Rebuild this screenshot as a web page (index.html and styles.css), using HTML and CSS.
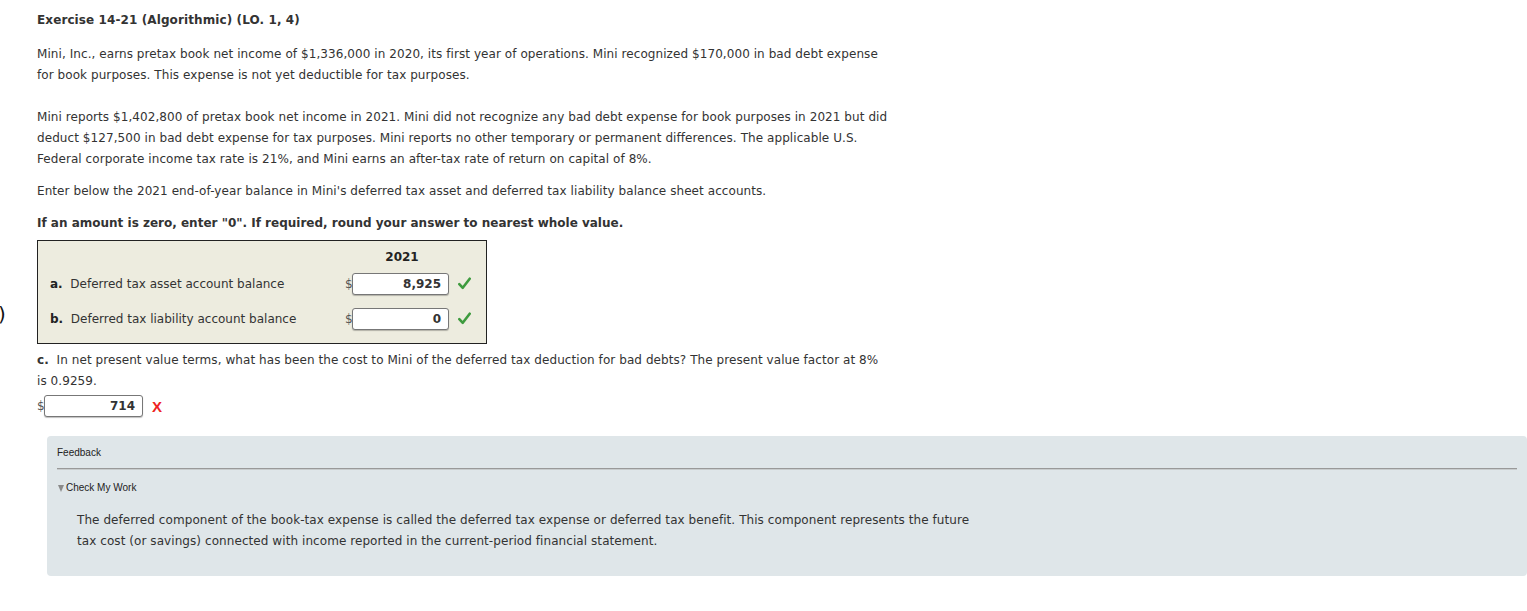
FILE: index.html
```html
<!DOCTYPE html>
<html>
<head>
<meta charset="utf-8">
<link rel="stylesheet" href="styles.css">
</head>
<body>
<span class="edge">)</span>
<main class="page">
  <h1 class="title">Exercise 14-21 (Algorithmic) (LO. 1, 4)</h1>
  <p class="para">Mini, Inc., earns pretax book net income of $1,336,000 in 2020, its first year of operations. Mini recognized $170,000 in bad debt expense<br>for book purposes. This expense is not yet deductible for tax purposes.</p>
  <p class="para gap-big">Mini reports $1,402,800 of pretax book net income in 2021. Mini did not recognize any bad debt expense for book purposes in 2021 but did<br>deduct $127,500 in bad debt expense for tax purposes. Mini reports no other temporary or permanent differences. The applicable U.S.<br>Federal corporate income tax rate is 21%, and Mini earns an after-tax rate of return on capital of 8%.</p>
  <p class="para">Enter below the 2021 end-of-year balance in Mini's deferred tax asset and deferred tax liability balance sheet accounts.</p>
  <p class="para strong">If an amount is zero, enter "0". If required, round your answer to nearest whole value.</p>

  <div class="answer-box">
    <div class="row head"><span class="label"></span><span class="year">2021</span></div>
    <div class="row">
      <span class="label"><b>a.</b>&nbsp; Deferred tax asset account balance</span>
      <span class="field"><span class="dollar">$</span><span class="input">8,925</span></span>
      <svg class="check" width="13" height="13" viewBox="0 0 12 12"><path d="M1.2 6.6 L4.4 10 L10.8 1.6" fill="none" stroke="#3e9b3e" stroke-width="2.4" stroke-linecap="round" stroke-linejoin="round"/></svg>
    </div>
    <div class="row">
      <span class="label"><b>b.</b>&nbsp; Deferred tax liability account balance</span>
      <span class="field"><span class="dollar">$</span><span class="input">0</span></span>
      <svg class="check" width="13" height="13" viewBox="0 0 12 12"><path d="M1.2 6.6 L4.4 10 L10.8 1.6" fill="none" stroke="#3e9b3e" stroke-width="2.4" stroke-linecap="round" stroke-linejoin="round"/></svg>
    </div>
  </div>

  <p class="para partc"><b>c.</b>&nbsp; In net present value terms, what has been the cost to Mini of the deferred tax deduction for bad debts? The present value factor at 8%<br>is 0.9259.</p>
  <div class="single">
    <span class="dollar">$</span><span class="input wide">714</span><span class="mark bad">X</span>
  </div>

  <section class="feedback">
    <div class="fb-title">Feedback</div>
    <hr class="fb-rule">
    <div class="fb-toggle"><span class="tri"></span>Check My Work</div>
    <p class="fb-text">The deferred component of the book-tax expense is called the deferred tax expense or deferred tax benefit. This component represents the future<br>tax cost (or savings) connected with income reported in the current-period financial statement.</p>
  </section>
</main>
</body>
</html>
```
FILE: styles.css
```css
html, body { margin: 0; padding: 0; background: #fff; }
body {
  font-family: "DejaVu Sans", Verdana, sans-serif;
  font-size: 12px;
  color: #333;
  position: relative;
}
.edge {
  position: absolute;
  left: -2px;
  top: 302px;
  font-size: 20px;
  color: #111;
}
.page { padding: 13px 0 0 37px; }
.title {
  font-size: 12px;
  font-weight: bold;
  margin: 0 0 17px 0;
  line-height: 14px;
  letter-spacing: 0.1px;
}
.para {
  margin: 0 0 10px 0;
  line-height: 21px;
  white-space: nowrap;
  letter-spacing: 0.07px;
}
.gap-big { margin-top: 21px; margin-bottom: 11px; }
.strong { font-weight: bold; margin-top: 11px; margin-bottom: 6px; letter-spacing: 0; }

.answer-box {
  width: 448px;
  height: 102px;
  border: 1px solid #222;
  background: #edecdf;
}
.row {
  display: flex;
  align-items: center;
  height: 35px;
}
.row.head { height: 18px; padding-top: 7px; }
.label { width: 294px; padding-left: 12px; color: #333; }
.label b { color: #222; }
.year { width: 116px; text-align: center; font-weight: bold; color: #222; }
.field { display: flex; align-items: center; margin-left: 1px; }
.dollar { color: #555; width: 7px; font-size: 12px; }
.input {
  display: inline-block;
  width: 88px;
  height: 20px;
  line-height: 20px;
  border: 1px solid #777;
  border-radius: 3px;
  background: #fff;
  text-align: right;
  padding-right: 7px;
  font-weight: bold;
  color: #333;
  box-shadow: 0 1px 1px rgba(0,0,0,0.25);
}
.check { margin-left: 9px; display: block; }
.partc { margin-top: 6px; margin-bottom: 2px; }
.single { display: flex; align-items: center; height: 24px; }
.input.wide { width: 90px; }
.mark.bad { color: #e22; font-weight: bold; font-family: "Liberation Sans", Arial, sans-serif; font-size: 15px; margin-left: 9px; }

.feedback {
  margin: 18px 0 0 10px;
  width: 1480px;
  height: 140px;
  background: #dfe6e9;
  border-radius: 4px;
  padding: 11px 10px 0 10px;
  box-sizing: border-box;
}
.fb-title {
  font-family: "Liberation Sans", Arial, sans-serif;
  font-size: 10px;
  color: #222;
  line-height: 12px;
}
.fb-rule {
  border: 0;
  border-top: 1px solid #999;
  border-bottom: 1px solid #c8cccd;
  margin: 9px 0 12px 0;
}
.fb-toggle {
  font-family: "Liberation Sans", Arial, sans-serif;
  font-size: 10px;
  color: #222;
  line-height: 12px;
  display: flex;
  align-items: center;
}
.tri {
  display: inline-block;
  width: 0; height: 0;
  border-left: 3px solid transparent;
  border-right: 3px solid transparent;
  border-top: 7px solid #8a8a8a;
  margin: 0 2px 0 1px;
}
.fb-text {
  margin: 16px 0 0 20px;
  line-height: 21px;
  white-space: nowrap;
  letter-spacing: 0.07px;
}
```
